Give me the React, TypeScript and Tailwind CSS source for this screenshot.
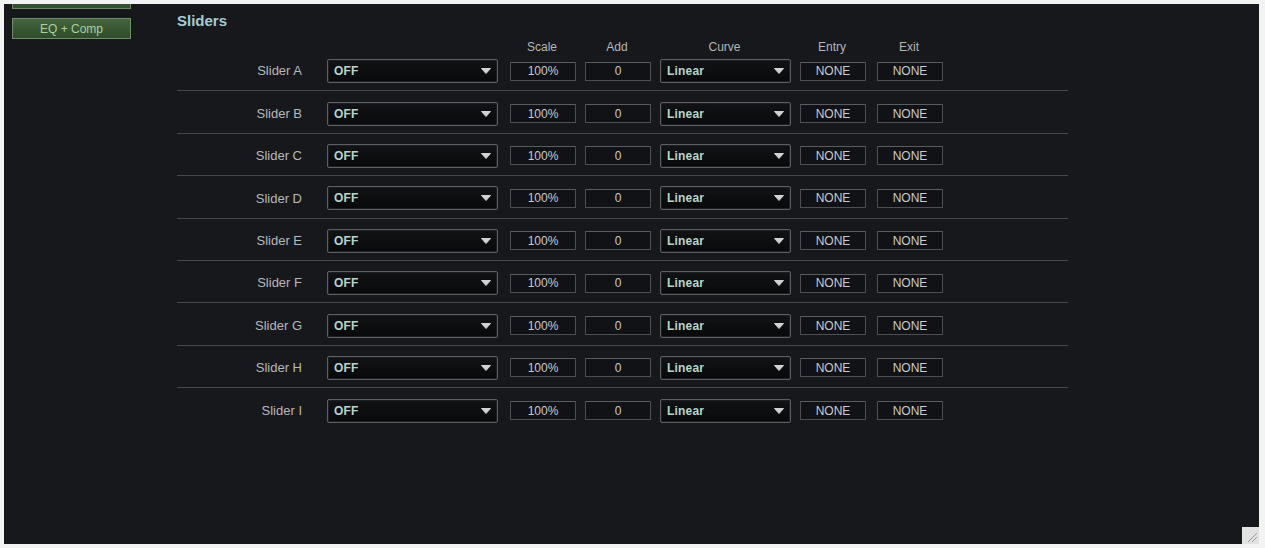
const SLIDERS = ['A', 'B', 'C', 'D', 'E', 'F', 'G', 'H', 'I']

const font = { fontFamily: '"Liberation Sans", Arial, sans-serif' }

function Caret() {
  return (
    <svg width="10" height="6" viewBox="0 0 10 6" className="shrink-0">
      <path d="M0.5 0.5 H9.5 L5 5.5 Z" fill="#cfd3d4" stroke="#cfd3d4" strokeLinejoin="round" />
    </svg>
  )
}

function Select({ value, width }: { value: string; width: string }) {
  return (
    <div
      className={`${width} h-[24px] flex items-center justify-between pl-[6px] pr-[6px] bg-gradient-to-b from-[#121316] to-[#08090a] border border-[#5c6063] shadow-[inset_0_0_0_1px_#1c1e21] rounded-[2px]`}
    >
      <span className="text-[12px] font-bold text-[#b7d6c8] tracking-[0.2px]">{value}</span>
      <Caret />
    </div>
  )
}

function Box({ value }: { value: string }) {
  return (
    <div className="w-[66px] h-[19px] flex items-center justify-center bg-[#111215] border border-[#4d5053] border-t-[#5a5d60] rounded-[1px] text-[12px] text-[#c9cbcc]">
      {value}
    </div>
  )
}

function SliderRow({ name, last }: { name: string; last: boolean }) {
  return (
    <div
      className={`flex items-center h-[42.4px] pt-[3px] ${last ? '' : 'border-b border-[#45484b]'}`}
    >
      <div className="w-[125px] text-right text-[13px] text-[#b6b8b9]">Slider {name}</div>
      <div className="ml-[25px]">
        <Select value="OFF" width="w-[171px]" />
      </div>
      <div className="ml-[12px]">
        <Box value="100%" />
      </div>
      <div className="ml-[9px]">
        <Box value="0" />
      </div>
      <div className="ml-[9px]">
        <Select value="Linear" width="w-[131px]" />
      </div>
      <div className="ml-[9px]">
        <Box value="NONE" />
      </div>
      <div className="ml-[11px]">
        <Box value="NONE" />
      </div>
    </div>
  )
}

export default function App() {
  return (
    <div className="w-[1265px] h-[548px] bg-[#f3f3f3] pt-[4px] pl-[4px] pr-[6px] pb-[4px] relative" style={font}>
      <div className="w-full h-full bg-[#16181c] flex overflow-hidden">
        {/* sidebar */}
        <div className="w-[173px] shrink-0 pl-[8px] flex flex-col gap-[9px] mt-[-16px]">
          <div className="w-[119px] h-[21px] bg-[#34502f] border border-[#6a8862]" />
          <div className="w-[119px] h-[21px] flex items-center justify-center bg-gradient-to-b from-[#45663d] to-[#2f4a2b] border border-[#6e8f66] text-[12px] text-[#a9d1a2]">
            EQ + Comp
          </div>
        </div>

        {/* main */}
        <div className="flex flex-col pt-[6px]">
          <div className="text-[15px] leading-[22px] font-bold text-[#a5ccd4]">Sliders</div>
          <div className="flex items-center h-[12px] leading-[12px] mt-[9px] text-[12px] text-[#b4b6b7]">
            <div className="w-[332px]" />
            <div className="w-[66px] text-center">Scale</div>
            <div className="w-[66px] ml-[9px] text-center">Add</div>
            <div className="w-[131px] ml-[9px] text-center">Curve</div>
            <div className="w-[66px] ml-[9px] text-center">Entry</div>
            <div className="w-[66px] ml-[11px] text-center">Exit</div>
          </div>
          <div className="w-[891px] mt-[-4px]">
            {SLIDERS.map((s, i) => (
              <SliderRow key={s} name={s} last={i === SLIDERS.length - 1} />
            ))}
          </div>
        </div>
      </div>

      {/* resize grip */}
      <div className="absolute right-[6px] bottom-[4px] w-[17px] h-[17px] bg-[#e2e2e2]">
        <svg width="17" height="17" viewBox="0 0 17 17">
          <path d="M15 6 L6 15 M15 10 L10 15" stroke="#9a9a9a" strokeWidth="1" />
        </svg>
      </div>
    </div>
  )
}
